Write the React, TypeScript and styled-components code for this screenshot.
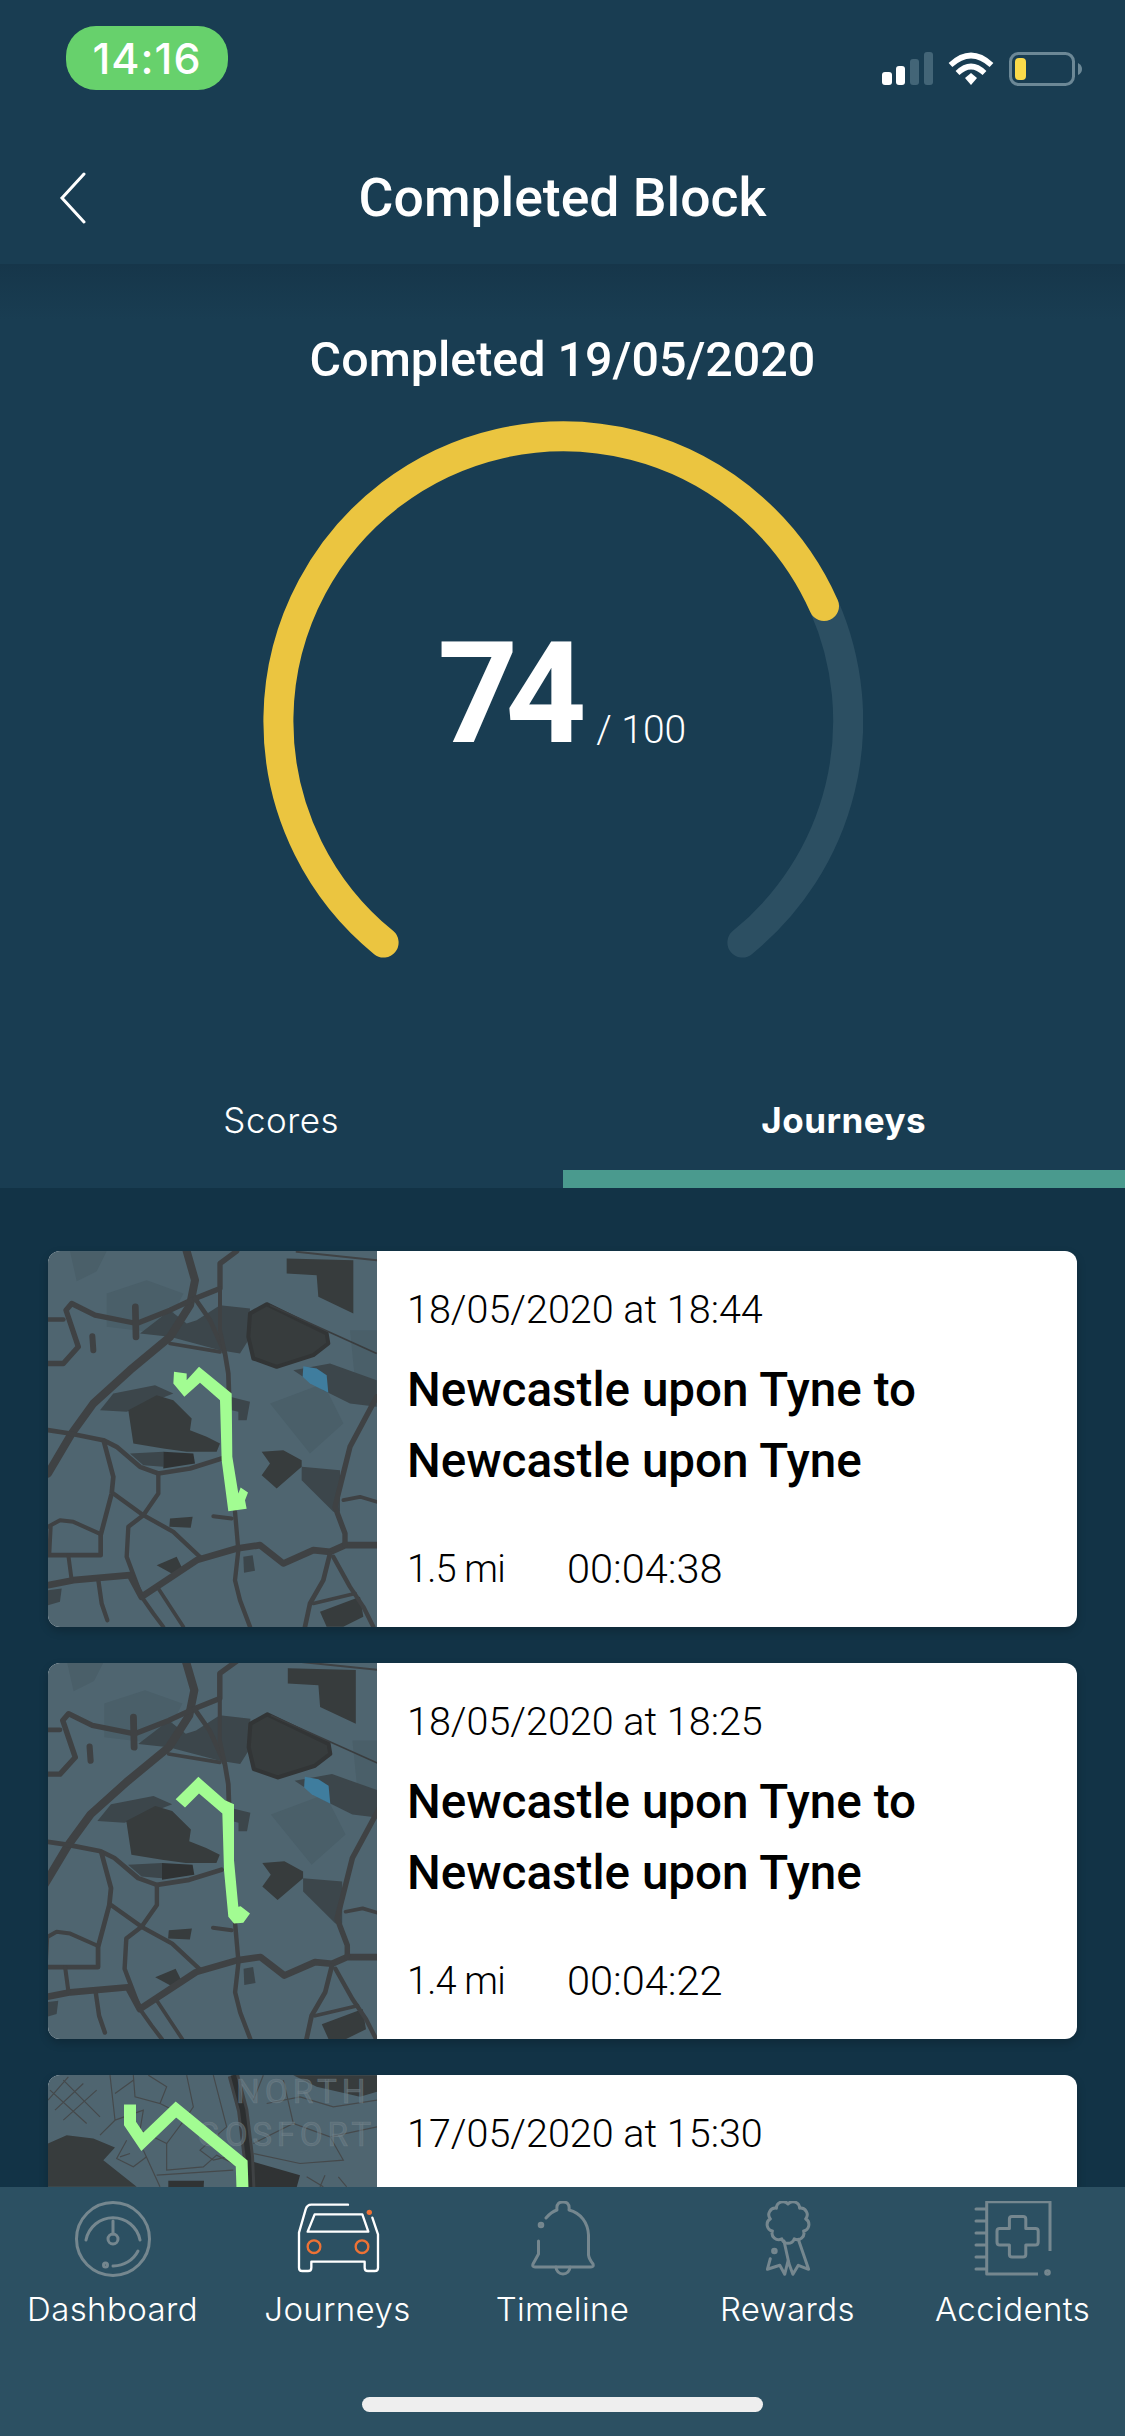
import React from 'react';
import styled, { createGlobalStyle } from 'styled-components';

const GlobalStyle = createGlobalStyle`
  html, body {
    margin: 0;
    padding: 0;
    background: #123346;
  }
  * { box-sizing: border-box; }
`;

const Screen = styled.div`
  width: 1125px;
  height: 2436px;
  display: flex;
  flex-direction: column;
  overflow: hidden;
  font-family: Roboto, "Liberation Sans", sans-serif;
  color: #fff;
  background: #193d52;
`;

const Header = styled.header`
  flex: none;
  height: 264px;
  display: flex;
  flex-direction: column;
`;

const StatusBar = styled.div`
  height: 130px;
  padding: 26px 43px 0 66px;
  display: flex;
  justify-content: space-between;
  align-items: flex-start;
`;

const TimePill = styled.div`
  width: 162px;
  height: 64px;
  border-radius: 30px;
  background: #67d16c;
  display: flex;
  align-items: center;
  justify-content: center;
  font-family: Inter, sans-serif;
  font-size: 43px;
  font-weight: 500;
  letter-spacing: 1px;
`;

const StatusIcons = styled.div`
  display: flex;
  align-items: flex-start;
  gap: 15px;
  margin-top: 26px;
`;

const NavRow = styled.div`
  flex: 1;
  display: grid;
  grid-template-columns: 1fr auto 1fr;
  align-items: center;
  padding: 2px 59px 0;
`;

const BackIcon = styled.svg`
  width: 28px;
  height: 52px;
  display: block;
`;

const PageTitle = styled.h1`
  margin: 0;
  font-size: 53.5px;
  font-weight: 500;
  line-height: 60px;
`;

const Hero = styled.section`
  flex: none;
  height: 924px;
  display: flex;
  flex-direction: column;
  align-items: center;
  padding-top: 66px;
  background: linear-gradient(#16364a, #193d52 56px);
`;

const CompletedLabel = styled.h2`
  margin: 0;
  font-size: 48.4px;
  font-weight: 500;
  line-height: 60px;
`;

const GaugeWrap = styled.div`
  position: relative;
  width: 600px;
  height: 600px;
  margin-top: 31px;
`;

const GaugeSvg = styled.svg`
  display: block;
  width: 600px;
  height: 600px;
`;

const ScoreText = styled.div`
  position: absolute;
  left: 175px;
  top: 200px;
  white-space: nowrap;
`;

const ScoreValue = styled.span`
  font-size: 141px;
  font-weight: 700;
  letter-spacing: -13px;
  line-height: 146px;
`;

const ScoreMax = styled.span`
  margin-left: 23px;
  font-size: 39px;
  font-weight: 300;
  vertical-align: -1px;
`;

const Tabs = styled.nav`
  width: 100%;
  margin-top: 31px;
  display: grid;
  grid-template-columns: 1fr 1fr;
`;

const Tab = styled.div<{ $active?: boolean }>`
  height: 136px;
  padding-top: 18px;
  display: flex;
  align-items: center;
  justify-content: center;
  font-family: Inter, sans-serif;
  font-size: 35px;
  font-weight: ${(p) => (p.$active ? 700 : 300)};
  letter-spacing: 0.5px;
  border-bottom: 18px solid ${(p) => (p.$active ? '#4a9a8e' : 'transparent')};
`;

const JourneyList = styled.main`
  flex: 1;
  min-height: 0;
  overflow: hidden;
  padding: 63px 48px 0;
  display: flex;
  flex-direction: column;
  gap: 36px;
  background: #123346;
`;

const Card = styled.article`
  flex: none;
  height: 376px;
  display: flex;
  border-radius: 12px;
  overflow: hidden;
  background: #fff;
  box-shadow: 0 4px 10px rgba(0, 0, 0, 0.2);
`;

const MapSvg = styled.svg`
  flex: none;
  display: block;
  width: 329px;
  height: 376px;
  background: #4f6570;
`;

const CardBody = styled.div`
  flex: 1;
  padding: 35px 0 0 30px;
  color: #000;
  display: flex;
  flex-direction: column;
`;

const CardDate = styled.div`
  font-size: 39.5px;
  font-weight: 300;
  line-height: 48px;
`;

const CardTitle = styled.h3`
  margin: 21px 0 0;
  font-size: 47.6px;
  font-weight: 500;
  line-height: 71px;
`;

const CardMeta = styled.div`
  margin-top: 48px;
  display: flex;
  font-size: 41.5px;
  font-weight: 300;
  line-height: 48px;
`;

const Distance = styled.span`
  flex: none;
  width: 160px;
  font-size: 38px;
  letter-spacing: -0.8px;
`;

const TabBar = styled.footer`
  flex: none;
  position: relative;
  height: 249px;
  background: #2c5062;
`;

const TabBarItems = styled.div`
  display: grid;
  grid-template-columns: repeat(5, 225px);
  padding-top: 14px;
`;

const TabBarItem = styled.div`
  display: flex;
  flex-direction: column;
  align-items: center;
`;

const TabBarIcon = styled.svg`
  display: block;
  width: 90px;
  height: 76px;
  fill: none;
  stroke: #75878f;
  stroke-width: 3;
  stroke-linecap: round;
  stroke-linejoin: round;
`;

const TabBarLabel = styled.span`
  margin-top: 10px;
  font-family: Inter, sans-serif;
  font-size: 33px;
  font-weight: 300;
  letter-spacing: 0.4px;
  line-height: 44px;
`;

const HomeIndicator = styled.div`
  position: absolute;
  left: 362px;
  bottom: 24px;
  width: 401px;
  height: 15px;
  border-radius: 8px;
  background: #eee;
`;

// road widths and points are traced from the first map, in 3x crop units
const roads: [number, string][] = [
  [24, '54,730 125,610 190,520 300,420 420,320 480,225 495,150 470,63'],
  [16, '620,63 570,100 570,175 495,205 420,240 320,280 195,255 125,220 108,240 145,350 100,400 54,400'],
  [20, '316,230 318,320'],
  [14, '54,268 100,268'],
  [18, '187,318 190,360'],
  [14, '495,205 540,270 585,370 595,430 597,490'],
  [12, '570,175 570,300 585,370'],
  [11, '420,340 570,365'],
  [14, '54,600 120,610 220,630 260,650 330,710 385,730 480,715 575,685'],
  [14, '222,635 250,740 245,790 212,915 212,975 54,975'],
  [13, '250,790 340,855 430,905 515,985'],
  [13, '385,730 385,790 340,855 295,890 290,980 320,1060 335,1100'],
  [20, '54,1065 130,1050 300,1035 335,1100 500,990 620,955 690,945 760,1000 850,960 900,965 945,945 1040,945'],
  [13, '615,845 625,960 615,1050 630,1110 660,1190'],
  [12, '550,858 605,865'],
  [16, '1040,500 960,650 940,730 915,830 945,910 945,945'],
  [11, '940,810 990,800 1040,815'],
  [14, '900,970 880,1050 840,1120 825,1190'],
  [13, '910,980 960,1070 1000,1130 1030,1190'],
  [11, '850,1120 975,1090'],
  [12, '54,890 90,870 130,875 212,912'],
  [12, '62,890 58,970'],
  [12, '115,975 125,1050'],
  [13, '205,1050 215,1120 232,1170'],
  [12, '335,1100 370,1150 400,1190'],
  [11, '385,1075 460,1190'],
  [6, '800,65 1040,90'],
];

const darkAreas = [
  '295,540 380,495 430,510 485,565 480,600 530,620 570,640 560,665 470,665 400,655 310,640',
  '770,85 970,90 970,250 865,200 860,135 770,130',
  '695,665 760,660 815,690 815,710 740,775 695,735 720,700',
  '420,865 488,860 482,893 418,890',
  '380,1005 440,980 457,1015 425,1030',
  '870,1145 990,1100 1000,1160 940,1190 890,1190',
];

const midAreas = [
  '210,540 250,490 375,465 430,490 290,545',
  '815,710 930,720 930,845 910,845 815,750',
  '300,670 400,665 400,710 340,705',
  '330,310 420,240 470,280 500,270 570,225 660,235 655,330 630,370 570,360 420,320',
  '600,500 660,515 650,570 625,570 625,545 605,540',
  '790,420 900,400 1040,450 1040,530 960,520 880,480',
  '640,980 668,975 675,1022 642,1028',
  '54,1080 95,1075 90,1115 54,1125',
];

function BaseMap({ transform }: { transform?: string }) {
  return (
    <g transform={transform}>
      <path d="M120 63h110l-30 60-60 30zM230 190l120-40 110 40-60 120-170-20zM720 520l160-60 60 120-100 90zM960 300h80v200h-60z" fill="#4a5f69" />
      {midAreas.map((pts) => (
        <polygon key={pts} points={pts} fill="#3c464b" />
      ))}
      {darkAreas.map((pts) => (
        <polygon key={pts} points={pts} fill="#373c3d" />
      ))}
      <polygon points="400,665 490,670 495,700 400,715" fill="#2f3233" />
      <path
        d="M660 250 710 222 890 310 895 340 850 375 740 410 670 385 655 320Z"
        fill="#373c3d"
        stroke="#323536"
        strokeWidth="12"
        strokeLinejoin="round"
      />
      <line x1="720" y1="225" x2="1040" y2="370" stroke="#3a3d3f" strokeWidth="5" />
      <polygon points="820,408 860,415 890,435 895,488 840,460 818,440" fill="#3f7d9e" />
      {roads.map(([w, pts]) => (
        <polyline
          key={pts}
          points={pts}
          fill="none"
          stroke="#3f4244"
          strokeWidth={w}
          strokeLinecap="round"
          strokeLinejoin="round"
        />
      ))}
    </g>
  );
}

function MapOne() {
  return (
    <MapSvg viewBox="54 63 987 1127">
      <BaseMap />
      <polygon
        points="432,425 470,430 470,450 507,410 605,490 607,680 625,790 632,772 654,787 645,810 650,836 595,843 575,690 570,510 510,458 463,500 430,460"
        fill="#a2fc92"
      />
    </MapSvg>
  );
}

function MapTwo() {
  return (
    <MapSvg viewBox="54 39 987 1127">
      <BaseMap transform="matrix(1.02 0 0 1.007 -12 -31)" />
      <polygon
        points="437,447 505,380 585,450 612,462 612,630 625,770 632,768 660,790 640,818 612,820 595,800 582,660 577,490 507,430 465,472"
        fill="#a2fc92"
      />
    </MapSvg>
  );
}

const thinRoads = [
  'M144 120 205 50M165 150 250 70M190 180 290 90M150 90 260 190M190 60 300 170',
  'M330 45 345 180 300 225M345 100 400 60M400 45 405 110 480 130 500 80 445 45M345 180 430 150 420 210 500 250 560 170 480 130',
  'M560 45 580 140 560 170 660 270M640 45 680 200 600 270 640 300 680 290M500 250 500 330 610 320 650 285 700 310M430 270 480 380',
  'M380 240 350 295 400 320 440 290M470 345 700 330M360 290 390 280',
  'M760 120 790 45M760 250 880 190 990 230 1131 200M800 130 900 110 1000 140 1131 120M850 60 880 190M990 230 1030 300 900 310 760 280',
  'M920 350 970 380M975 345 960 380M1015 350 1040 380',
];

function MapThree() {
  return (
    <MapSvg viewBox="144 45 987 1127">
      <path d="M144 250 200 225 280 235 345 262 310 300 410 380H144Z" fill="#373c3d" />
      <path d="M880 45H1131V95L1080 110 950 80Z" fill="#373c3d" />
      <path d="M505 362H612L610 400H505Z" fill="#303334" />
      <path d="M760 305 900 345 885 400H750Z" fill="#303334" />
      <path d="M700 45 728 150 745 290 750 400" fill="none" stroke="#3f4244" strokeWidth="34" />
      <path d="M700 45 728 150 745 290 750 400" fill="none" stroke="#2c2f30" strokeWidth="16" />
      {thinRoads.map((d) => (
        <path key={d} d={d} fill="none" stroke="#45494b" strokeWidth="3.5" />
      ))}
      <text x="708" y="128" fontFamily="Roboto" fontSize="100" letterSpacing="15" fill="#6c7d86" fillOpacity="0.55" stroke="#7a8990" strokeOpacity="0.5" strokeWidth="2">
        NORTH
      </text>
      <text x="592" y="258" fontFamily="Roboto" fontSize="100" letterSpacing="14" fill="#6c7d86" fillOpacity="0.55" stroke="#7a8990" strokeOpacity="0.5" strokeWidth="2">
        GOSFORT
      </text>
      <polyline points="390,133 390,190 427,245 528,148 725,310 728,400" fill="none" stroke="#a2fc92" strokeWidth="36" />
    </MapSvg>
  );
}

// scalloped rosette outline for the rewards icon
const rosette = (() => {
  const lobes = 9;
  let d = '';
  for (let i = 0; i <= lobes; i++) {
    const a = (i / lobes) * Math.PI * 2 - Math.PI / 2;
    const x = (18 * Math.cos(a) + 45).toFixed(1);
    const y = (18 * Math.sin(a) + 21).toFixed(1);
    d += i === 0 ? `M${x} ${y}` : `A6.6 6.6 0 0 1 ${x} ${y}`;
  }
  return d;
})();

function DashboardIcon() {
  return (
    <TabBarIcon viewBox="0 0 90 76">
      <circle cx="45" cy="38" r="36.5" />
      <path d="M18 39A27.5 27.5 0 0 1 72 39" />
      <path d="M45 20V33" />
      <circle cx="45" cy="38" r="5" />
      <path d="M70 50A27.5 27.5 0 0 1 45 65" />
      <circle cx="37.5" cy="64" r="2" />
    </TabBarIcon>
  );
}

function CarIcon() {
  return (
    <TabBarIcon viewBox="880 425 270 228" style={{ strokeWidth: 7 }}>
      <g stroke="#fff">
        <path d="M1045 436H935Q922 436 918 450L898 520V625Q898 635 908 635H925Q935 635 935 625V607H1095V625Q1095 635 1105 635H1125Q1135 635 1135 625V525L1118 475" />
        <path d="M945 465H1088L1106 517H924Z" />
      </g>
      <g stroke="#ee7235">
        <circle cx="943" cy="562" r="19" />
        <circle cx="1087" cy="562" r="19" />
      </g>
      <circle cx="1109" cy="459" r="8" fill="#ee7235" stroke="none" />
    </TabBarIcon>
  );
}

function BellIcon() {
  return (
    <TabBarIcon viewBox="-45 0 90 76">
      <path d="M-17 17Q-12 11-6 9C-7 2-3 1 0 1S7 2 6 9C18 12 25 22 25.500 34V54Q26 58 30 63 31 66 28 66H-28Q-31 66-30 63L-24.500 53V40" />
      <path d="M-7 66A7 7 0 0 0 7 66" />
      <circle cx="-22" cy="24" r="1.800" />
    </TabBarIcon>
  );
}

function RewardsIcon() {
  return (
    <TabBarIcon viewBox="-45 0 90 76">
      <g transform="translate(-45 0)">
        <path d={rosette} />
      </g>
      <path d="M-17.700 57.700-20.600 68.300-8.200 64.300-3.300 73.300 0 60 4.900 73.300 10.300 64.300 20.600 68.300 10.300 38.300" />
      <path d="M-4 40 .8 61.700" />
      <circle cx="-13.600" cy="50" r="1.800" />
    </TabBarIcon>
  );
}

function AccidentsIcon() {
  return (
    <TabBarIcon viewBox="-8 0 90 76">
      <path d="M62 73H10.700V.7H74V50" strokeLinecap="butt" />
      <path d="M0 8H10M0 20H10M0 32H10M0 44H10M0 56H10M0 68H10" />
      <path d="M33.400 18Q33.400 15.400 36 15.400H47Q49.800 15.400 49.800 18V27.500H59.500Q62.200 27.500 62.200 30V41Q62.200 44 59.500 44H49.800V53.500Q49.800 56 47 56H36Q33.400 56 33.400 53.500V44H23.700Q21 44 21 41V30Q21 27.500 23.700 27.500H33.400Z" />
      <circle cx="71.500" cy="71.500" r="1.800" />
    </TabBarIcon>
  );
}

const tabItems = [
  { label: 'Dashboard', icon: <DashboardIcon /> },
  { label: 'Journeys', icon: <CarIcon /> },
  { label: 'Timeline', icon: <BellIcon /> },
  { label: 'Rewards', icon: <RewardsIcon /> },
  { label: 'Accidents', icon: <AccidentsIcon /> },
];

export default function App() {
  return (
    <Screen>
      <GlobalStyle />
      <Header>
        <StatusBar>
          <TimePill>14:16</TimePill>
          <StatusIcons>
            <svg width="51" height="33" viewBox="0 0 51 33">
              <rect x="0" y="20" width="10" height="13" rx="3" fill="#fff" />
              <rect x="14" y="14" width="9" height="19" rx="3" fill="#fff" />
              <rect x="28" y="7" width="9" height="26" rx="3" fill="#436577" />
              <rect x="42" y="0" width="9" height="33" rx="3" fill="#436577" />
            </svg>
            <svg width="46" height="33" viewBox="0 0 46 33">
              <path d="M2.500 13Q23-6 43.500 13" fill="none" stroke="#fff" strokeWidth="5.500" />
              <path d="M9.500 21Q23 8 36.500 21" fill="none" stroke="#fff" strokeWidth="5.500" />
              <path d="M17 26 23 21 29 26 23 33Z" fill="#fff" />
            </svg>
            <svg width="73" height="34" viewBox="0 0 73 34">
              <rect x="1.500" y="1.500" width="63" height="31" rx="8" fill="none" stroke="#6c8896" strokeWidth="3" />
              <rect x="6" y="6" width="11" height="22" rx="4" fill="#fada4a" />
              <path d="M69 11Q73 13 73 17T69 23Z" fill="#6c8896" />
            </svg>
          </StatusIcons>
        </StatusBar>
        <NavRow>
          <BackIcon viewBox="0 0 28 52">
            <path d="M25 2 3 26 25 50" fill="none" stroke="#fff" strokeWidth="3" strokeLinecap="round" />
          </BackIcon>
          <PageTitle>Completed Block</PageTitle>
        </NavRow>
      </Header>

      <Hero>
        <CompletedLabel>Completed 19/05/2020</CompletedLabel>
        <GaugeWrap>
          <GaugeSvg viewBox="0 0 600 600">
            <path d="M561 185A285 285 0 0 1 479.400 521.500" fill="none" stroke="#2c4f62" strokeWidth="30" strokeLinecap="round" />
            <path d="M120.600 521.500A285 285 0 1 1 561 185" fill="none" stroke="#ebc540" strokeWidth="30" strokeLinecap="round" />
          </GaugeSvg>
          <ScoreText>
            <ScoreValue>74</ScoreValue>
            <ScoreMax>/ 100</ScoreMax>
          </ScoreText>
        </GaugeWrap>
        <Tabs>
          <Tab>Scores</Tab>
          <Tab $active>Journeys</Tab>
        </Tabs>
      </Hero>

      <JourneyList>
        <Card>
          <MapOne />
          <CardBody>
            <CardDate>18/05/2020 at 18:44</CardDate>
            <CardTitle>
              Newcastle upon Tyne to
              <br />
              Newcastle upon Tyne
            </CardTitle>
            <CardMeta>
              <Distance>1.5 mi</Distance>
              <span>00:04:38</span>
            </CardMeta>
          </CardBody>
        </Card>
        <Card>
          <MapTwo />
          <CardBody>
            <CardDate>18/05/2020 at 18:25</CardDate>
            <CardTitle>
              Newcastle upon Tyne to
              <br />
              Newcastle upon Tyne
            </CardTitle>
            <CardMeta>
              <Distance>1.4 mi</Distance>
              <span>00:04:22</span>
            </CardMeta>
          </CardBody>
        </Card>
        <Card>
          <MapThree />
          <CardBody>
            <CardDate>17/05/2020 at 15:30</CardDate>
          </CardBody>
        </Card>
      </JourneyList>

      <TabBar>
        <TabBarItems>
          {tabItems.map((item) => (
            <TabBarItem key={item.label}>
              {item.icon}
              <TabBarLabel>{item.label}</TabBarLabel>
            </TabBarItem>
          ))}
        </TabBarItems>
        <HomeIndicator />
      </TabBar>
    </Screen>
  );
}
